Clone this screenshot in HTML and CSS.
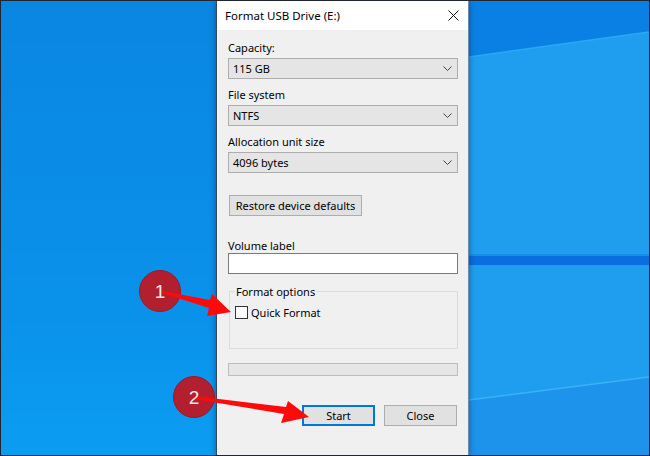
FILE: index.html
```html
<html>
<head>
	<link rel="stylesheet" href="styles.css">
</head>
<body>
<div class="desktop">
	<div class="wall-left"></div>

	<div class="dialog">
		<div class="titlebar">
			<span class="title">Format USB Drive (E:)</span>
			<svg class="close" width="11" height="11" viewBox="0 0 11 11"><path d="M0.5 0.5L10.5 10.5M10.5 0.5L0.5 10.5" stroke="#111" stroke-width="1"/></svg>
		</div>
		<div class="body">
			<div class="label first">Capacity:</div>
			<div class="select"><span>115 GB</span><svg width="9" height="5" viewBox="0 0 9 5"><path d="M0.5 0.5L4.5 4.5L8.5 0.5" fill="none" stroke="#444"/></svg></div>

			<div class="label">File system</div>
			<div class="select"><span>NTFS</span><svg width="9" height="5" viewBox="0 0 9 5"><path d="M0.5 0.5L4.5 4.5L8.5 0.5" fill="none" stroke="#444"/></svg></div>

			<div class="label">Allocation unit size</div>
			<div class="select"><span>4096 bytes</span><svg width="9" height="5" viewBox="0 0 9 5"><path d="M0.5 0.5L4.5 4.5L8.5 0.5" fill="none" stroke="#444"/></svg></div>

			<button class="btn restore">Restore device defaults</button>

			<div class="label vol">Volume label</div>
			<div class="textbox"></div>

			<fieldset class="group">
				<legend>Format options</legend>
				<div class="check"><span class="box"></span>Quick Format</div>
			</fieldset>

			<div class="progress"></div>

			<div class="actions">
				<button class="btn start">Start</button>
				<button class="btn">Close</button>
			</div>
		</div>
	</div>

	<div class="wall-right">
		<svg width="180" height="454" viewBox="0 0 180 454">
			<rect x="0" y="0" width="180" height="454" fill="#1f9ef0"/>
			<polygon points="0,0 180,0 180,31 0,56" fill="#0b80e4"/>
			<line x1="0" y1="56" x2="180" y2="31" stroke="#2aa8f4" stroke-width="1.5"/>
			<rect x="0" y="253" width="180" height="2" fill="#1a8cea"/>
			<rect x="0" y="255" width="180" height="9" fill="#0a6edf"/>
			<polygon points="0,399 180,376 180,454 0,454" fill="#1d93ec"/>
			<line x1="0" y1="399" x2="180" y2="376" stroke="#3ab2f6" stroke-width="1.5"/>
		</svg>
	</div>

	<!-- callouts drawn over the dialog -->
	<svg class="marks" width="648" height="454" viewBox="1 1 648 454">
		<circle cx="160" cy="291" r="20.5" fill="#b21f2f" stroke="#9a1a28" stroke-width="1"/>
		<polygon points="162,291 210,300 212,294 231,312 207,316 209,308 162,293" fill="#ff0a0a"/>
		<text x="160" y="298" class="num">1</text>

		<circle cx="194" cy="397" r="20.5" fill="#b21f2f" stroke="#9a1a28" stroke-width="1"/>
		<polygon points="194,396 286,407 288,401 309,417 281,423 284,414 194,399" fill="#ff0a0a"/>
		<text x="194" y="404" class="num">2</text>
	</svg>
</div>
</body>
</html>
```

FILE: styles.css
```css
body {margin:0;background:#1d2631;}
.desktop {position:relative;width:650px;height:456px;box-sizing:border-box;border:1px solid #1d2631;
	display:flex;overflow:hidden;font-family:"Noto Sans","Open Sans",sans-serif;font-size:11px;color:#000;}

.wall-left {width:215px;background:linear-gradient(#0a86e1,#0a92eb 70%,#0b9df1);}
.wall-right {width:180px;}
.wall-right svg {display:block;}

.dialog {width:251px;display:flex;flex-direction:column;background:#f0f0f0;
	border-left:1px solid #34485e;border-right:1px solid #6d8aa6;box-shadow:0 0 6px rgba(0,20,60,.45);z-index:1;}
.titlebar {height:29px;background:#fff;display:flex;align-items:center;justify-content:space-between;padding:0 9px 0 8px;}
.title {font-size:11.5px;}
.close {display:block;}

.body {padding:0 10px 0 11px;display:flex;flex-direction:column;}
.label {line-height:15px;margin-top:8px;}
.label.first {margin-top:10px;}
.label.vol {margin-top:22px;}
.select {height:21px;box-sizing:border-box;margin-top:3px;border:1px solid #adadad;background:#e5e5e5;
	display:flex;align-items:center;justify-content:space-between;padding:0 5px 0 4px;}

.btn {font:inherit;color:#000;height:21px;box-sizing:border-box;padding:0;background:#e1e1e1;border:1px solid #adadad;}
.restore {width:133px;margin:22px 0 0 1px;}

.textbox {height:21px;box-sizing:border-box;background:#fff;border:1px solid #7a7a7a;}

.group {margin:10px 0 0 1px;padding:6px 6px 28px 5px;border:1px solid #dcdcdc;}
.group legend {padding:0 1px;line-height:15px;}
.check {display:flex;align-items:center;line-height:15px;}
.box {width:13px;height:13px;box-sizing:border-box;border:1px solid #333;background:#fff;margin-right:3px;}

.progress {height:13px;box-sizing:border-box;margin-top:14px;background:#e6e6e6;border:1px solid #bcbcbc;}

.actions {display:flex;justify-content:flex-end;gap:9px;margin-top:29px;padding-right:1px;}
.actions .btn {width:73px;}
.start {border:2px solid #0078d7;}

.marks {position:absolute;left:0;top:0;z-index:2;}
.num {font-family:"Liberation Sans",Arial,sans-serif;font-size:19px;fill:#f6e8e8;text-anchor:middle;}
```
